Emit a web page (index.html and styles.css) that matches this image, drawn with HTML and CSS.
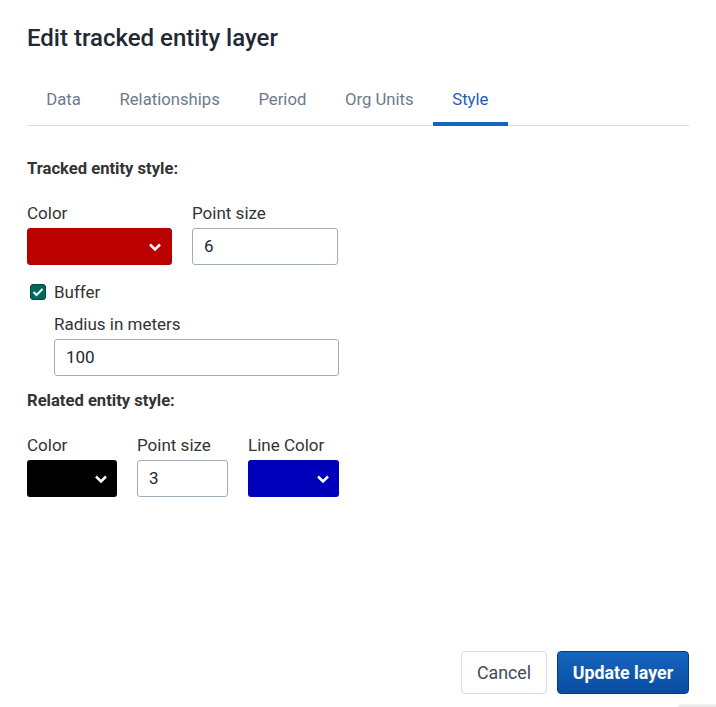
FILE: index.html
```html
<!DOCTYPE html>
<html>
<head>
<meta charset="utf-8">
<link rel="stylesheet" href="styles.css">
</head>
<body>
<div class="modal">
  <h1 class="title">Edit tracked entity layer</h1>
  <div class="tabs">
    <div class="tab">Data</div>
    <div class="tab">Relationships</div>
    <div class="tab">Period</div>
    <div class="tab">Org Units</div>
    <div class="tab active">Style</div>
  </div>
  <div class="content">
    <div class="heading h1st">Tracked entity style:</div>
    <div class="row">
      <div class="field">
        <div class="label">Color</div>
        <div class="swatch w145 red"><svg class="chev" width="12" height="8" viewBox="0 0 12 8"><path d="M1 1.5 L6 6.5 L11 1.5" fill="none" stroke="#fff" stroke-width="2.5"/></svg></div>
      </div>
      <div class="field">
        <div class="label">Point size</div>
        <div class="input w146">6</div>
      </div>
    </div>
    <div class="check">
      <span class="box"><svg width="12" height="10" viewBox="0 0 12 10"><path d="M1.5 5 L4.5 8 L10.5 2" fill="none" stroke="#fff" stroke-width="2"/></svg></span>
      <span>Buffer</span>
    </div>
    <div class="field indent">
      <div class="label">Radius in meters</div>
      <div class="input w285">100</div>
    </div>
    <div class="heading h2nd">Related entity style:</div>
    <div class="row">
      <div class="field">
        <div class="label">Color</div>
        <div class="swatch w90 black"><svg class="chev" width="12" height="8" viewBox="0 0 12 8"><path d="M1 1.5 L6 6.5 L11 1.5" fill="none" stroke="#fff" stroke-width="2.5"/></svg></div>
      </div>
      <div class="field">
        <div class="label">Point size</div>
        <div class="input w91">3</div>
      </div>
      <div class="field">
        <div class="label">Line Color</div>
        <div class="swatch w91 blue"><svg class="chev" width="12" height="8" viewBox="0 0 12 8"><path d="M1 1.5 L6 6.5 L11 1.5" fill="none" stroke="#fff" stroke-width="2.5"/></svg></div>
      </div>
    </div>
  </div>
  <div class="actions">
    <button class="btn secondary">Cancel</button>
    <button class="btn primary">Update layer</button>
  </div>
</div>
<div class="edge-shadow"></div>
</body>
</html>
```
FILE: styles.css
```css
html, body {
  margin: 0;
  padding: 0;
  background: #fff;
}
body {
  position: relative;
  font-family: Roboto, "Liberation Sans", sans-serif;
  color: #212934;
  width: 716px;
  height: 707px;
  overflow: hidden;
}
.modal {
  padding: 22px 27px 0 27px;
  height: 707px;
  box-sizing: border-box;
  display: flex;
  flex-direction: column;
}
.title {
  margin: 0;
  font-size: 24px;
  line-height: 32px;
  font-weight: 500;
  color: #212934;
}
.tabs {
  margin-top: 22px;
  display: flex;
  border-bottom: 1px solid #d5dde5;
  height: 49px;
}
.tab {
  position: relative;
  padding: 0 19.3px;
  font-size: 16.7px;
  line-height: 48px;
  color: #6e7a8a;
}
.tab.active {
  color: #1b5fb8;
}
.tab.active::after {
  content: "";
  position: absolute;
  left: 0;
  right: 0;
  bottom: -1px;
  height: 4px;
  background: #1565c0;
}
.content {
  display: flex;
  flex-direction: column;
  align-items: flex-start;
}
.heading {
  font-size: 16.6px;
  font-weight: 700;
  line-height: 20px;
  color: #333;
}
.h1st { margin-top: 33px; }
.h2nd { margin-top: 15px; }
.row {
  display: flex;
  gap: 20px;
  margin-top: 24px;
}
.field {
  display: flex;
  flex-direction: column;
}
.label {
  font-size: 17px;
  line-height: 20px;
  margin-bottom: 5px;
  color: #333;
}
.swatch {
  height: 37px;
  border-radius: 3px;
  box-sizing: border-box;
  display: flex;
  align-items: center;
  justify-content: flex-end;
  padding-right: 10px;
}
.red { background: #bb0000; border: 1px solid #b30000; }
.black { background: #000; }
.blue { background: #0000bb; }
.input {
  height: 37px;
  box-sizing: border-box;
  border: 1px solid #a0adba;
  border-radius: 3px;
  padding: 0 11px;
  font-size: 17px;
  line-height: 35px;
  color: #212934;
}
.w145 { width: 145px; }
.w146 { width: 146px; }
.w90 { width: 90px; }
.w91 { width: 91px; }
.w285 { width: 285px; }
.check {
  display: flex;
  align-items: center;
  gap: 8px;
  margin-top: 18px;
  margin-left: 3px;
  font-size: 17px;
  line-height: 18px;
  color: #333;
}
.box {
  width: 16px;
  height: 16px;
  border-radius: 3px;
  background: #00695c;
  border: 1px solid #004d40;
  box-sizing: border-box;
  display: flex;
  align-items: center;
  justify-content: center;
}
.indent {
  margin-left: 27px;
  margin-top: 13px;
}
.actions {
  margin-top: auto;
  margin-bottom: 13px;
  display: flex;
  justify-content: flex-end;
  gap: 10px;
}
.btn {
  height: 43px;
  border-radius: 4px;
  font-family: Roboto, "Liberation Sans", sans-serif;
  font-size: 17.8px;
  padding: 0;
}
.secondary {
  width: 86px;
  background: #fff;
  border: 1px solid #d5dde5;
  color: #404b5a;
}
.primary {
  width: 132px;
  background: linear-gradient(180deg, #1565c0 0%, #0a4ca0 100%);
  border: 1px solid #093b85;
  color: #fff;
  font-weight: 700;
}
.edge-shadow {
  position: absolute;
  right: 0;
  bottom: 0;
  width: 38px;
  height: 3px;
  background: linear-gradient(180deg, #f4f4f4, #e4e4e4);
  border-radius: 3px 0 0 0;
}
```
